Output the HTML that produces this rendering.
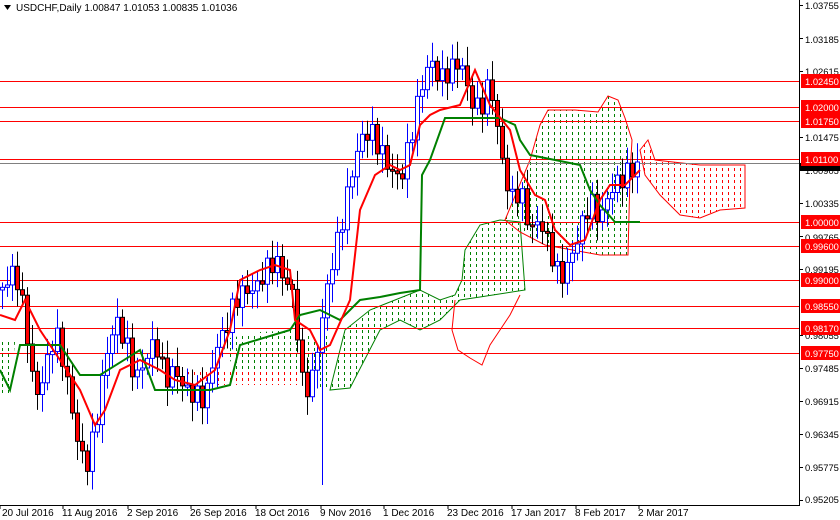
<!DOCTYPE html>
<html><head><meta charset="utf-8"><style>
html,body{margin:0;padding:0;background:#fff;width:840px;height:520px;overflow:hidden;font-family:"Liberation Sans",sans-serif}
svg{display:block}
text{font-family:"Liberation Sans",sans-serif;font-size:10px}
.ax text{font-size:9.4px}
</style></head><body>
<svg id="s" width="840" height="520" xmlns="http://www.w3.org/2000/svg">
<defs>
<pattern id="gd" width="6" height="6" patternUnits="userSpaceOnUse"><rect x="2" y="0" width="1" height="3" fill="#008000"/></pattern>
<pattern id="rd" width="6" height="6" patternUnits="userSpaceOnUse"><rect x="2" y="0" width="1" height="3" fill="#ff0000"/></pattern>
</defs>
<rect width="840" height="520" fill="#fff"/>
<polygon fill="url(#gd)" stroke="#008000" stroke-width="1" points="330,390 345,330 370,310 395,300 420,290 440,300 455,295 462,280 465,250 480,225 500,220 520,222 525,290 480,297 460,300 440,320 420,330 400,320 380,330 350,388"/>
<polygon fill="url(#gd)" stroke="#ff0000" stroke-width="1" points="505,220 530,160 540,125 548,110 575,110 598,112 608,96 618,100 625,118 632,140 630,175 628,255 600,255 545,245 520,232"/>
<polygon fill="url(#gd)" points="0,340 15,342 10,395 0,395"/>
<polygon fill="url(#gd)" points="220,340 260,332 300,330 320,340 330,330 330,390 310,385 260,385 240,380"/>
<polygon fill="url(#rd)" stroke="#ff0000" stroke-width="1" points="640,150 648,140 655,160 700,165 745,165 745,208 720,210 700,218 680,215 660,195 645,175"/>
<polygon fill="url(#rd)" points="180,370 230,372 300,370 300,385 260,385 210,385"/>
<polyline fill="none" stroke="#ff0000" stroke-width="1" points="455,300 452,330 458,350 470,358 482,365 490,345 500,330 510,315 520,295"/>
<g stroke="#ff0000" stroke-width="1">
<line x1="0" x2="799" y1="81.5" y2="81.5"/><line x1="0" x2="799" y1="107.5" y2="107.5"/>
<line x1="0" x2="799" y1="121.5" y2="121.5"/><line x1="0" x2="799" y1="159.5" y2="159.5"/>
<line x1="0" x2="799" y1="222.5" y2="222.5"/><line x1="0" x2="799" y1="246.5" y2="246.5"/>
<line x1="0" x2="799" y1="280.5" y2="280.5"/><line x1="0" x2="799" y1="306.5" y2="306.5"/>
<line x1="0" x2="799" y1="328.5" y2="328.5"/><line x1="0" x2="799" y1="353.5" y2="353.5"/>
</g>
<line x1="0" x2="799" y1="163.5" y2="163.5" stroke="#808080"/>
<g id="candles"></g>
<polyline fill="none" stroke="#008000" stroke-width="2" points="0,370 10,390 20,345 60,345 80,375 100,375 140,350 155,390 210,390 230,385 240,345 290,330 300,315 320,310 340,320 360,300 380,297 400,293 420,290 422,175 430,160 445,118 500,118 515,125 520,140 530,155 580,165 590,190 600,205 615,222 640,222"/>
<polyline fill="none" stroke="#ff0000" stroke-width="2" points="0,315 15,320 25,300 40,330 60,360 80,390 95,425 105,410 120,370 140,360 160,370 175,380 195,385 215,370 230,330 240,280 260,270 275,265 290,270 295,320 310,330 320,350 330,345 350,300 360,210 375,175 390,165 400,170 410,165 420,125 430,115 440,110 460,105 475,70 490,105 510,130 520,170 535,195 545,200 555,230 570,245 585,240 600,200 610,185 625,185 640,170"/>
<line x1="799.5" y1="0" x2="799.5" y2="505" stroke="#000"/>
<line x1="0" y1="505.5" x2="800" y2="505.5" stroke="#000"/>
<g class="ax">
<g fill="#000">
<text x="805" y="9">1.03755</text><text x="805" y="43">1.03185</text><text x="805" y="75">1.02615</text>
<text x="805" y="141">1.01475</text><text x="805" y="174">1.00905</text><text x="805" y="207">1.00335</text>
<text x="805" y="241">0.99765</text><text x="805" y="273">0.99195</text><text x="805" y="339">0.98055</text>
<text x="805" y="372">0.97485</text><text x="805" y="405">0.96915</text><text x="805" y="438">0.96345</text>
<text x="805" y="471">0.95775</text><text x="805" y="503">0.95205</text>
</g>
<g stroke="#000"><line x1="799" x2="803" y1="5.5" y2="5.5"/><line x1="799" x2="803" y1="38.5" y2="38.5"/><line x1="799" x2="803" y1="71.5" y2="71.5"/><line x1="799" x2="803" y1="137.5" y2="137.5"/><line x1="799" x2="803" y1="170.5" y2="170.5"/><line x1="799" x2="803" y1="203.5" y2="203.5"/><line x1="799" x2="803" y1="236.5" y2="236.5"/><line x1="799" x2="803" y1="269.5" y2="269.5"/><line x1="799" x2="803" y1="335.5" y2="335.5"/><line x1="799" x2="803" y1="368.5" y2="368.5"/><line x1="799" x2="803" y1="401.5" y2="401.5"/><line x1="799" x2="803" y1="434.5" y2="434.5"/><line x1="799" x2="803" y1="467.5" y2="467.5"/><line x1="799" x2="803" y1="500.5" y2="500.5"/></g>
<rect x="800" y="163" width="40" height="8" fill="#000"/>
<g fill="#ff0000">
<rect x="801" y="74" width="39" height="14"/><rect x="801" y="100" width="39" height="14"/><rect x="801" y="114" width="39" height="14"/>
<rect x="801" y="152" width="39" height="14"/><rect x="801" y="215" width="39" height="14"/><rect x="801" y="239" width="39" height="14"/>
<rect x="801" y="273" width="39" height="14"/><rect x="801" y="299" width="39" height="14"/><rect x="801" y="321" width="39" height="14"/>
<rect x="801" y="346" width="39" height="14"/>
</g>
<g fill="#fff">
<text x="805" y="85">1.02450</text><text x="805" y="111">1.02000</text><text x="805" y="125">1.01750</text>
<text x="805" y="163">1.01100</text><text x="805" y="226">1.00000</text><text x="805" y="250">0.99600</text>
<text x="805" y="284">0.99000</text><text x="805" y="310">0.98550</text><text x="805" y="332">0.98170</text>
<text x="805" y="357">0.97750</text>
</g>
</g>
<g fill="#000">
<text x="2" y="516">20 Jul 2016</text><text x="62" y="516">11 Aug 2016</text><text x="127" y="516">2 Sep 2016</text>
<text x="190" y="516">26 Sep 2016</text><text x="255" y="516">18 Oct 2016</text><text x="320" y="516">9 Nov 2016</text>
<text x="383" y="516">1 Dec 2016</text><text x="447" y="516">23 Dec 2016</text><text x="511" y="516">17 Jan 2017</text>
<text x="575" y="516">8 Feb 2017</text><text x="638" y="516">2 Mar 2017</text>
</g>
<g stroke="#000"><line x1="0" x2="0" y1="505" y2="509"/><line x1="63" x2="63" y1="505" y2="509"/><line x1="128" x2="128" y1="505" y2="509"/><line x1="191" x2="191" y1="505" y2="509"/><line x1="256" x2="256" y1="505" y2="509"/><line x1="321" x2="321" y1="505" y2="509"/><line x1="384" x2="384" y1="505" y2="509"/><line x1="448" x2="448" y1="505" y2="509"/><line x1="512" x2="512" y1="505" y2="509"/><line x1="576" x2="576" y1="505" y2="509"/><line x1="639" x2="639" y1="505" y2="509"/></g>
<polygon points="4,5 11,5 7.5,10" fill="#000"/>
<text x="16" y="11" fill="#000">USDCHF,Daily  1.00847 1.01053 1.00835 1.01036</text>
</svg>
<script>
var A=[[0,290],[15,270],[25,320],[35,400],[45,370],[55,330],[65,370],[75,430],[85,470],[95,430],[105,360],[115,320],[125,340],[135,380],[145,360],[155,340],[165,380],[175,370],[185,390],[195,395],[205,400],[215,350],[225,330],[235,300],[245,290],[255,290],[265,270],[275,260],[285,280],[295,300],[300,380],[310,390],[320,330],[330,270],[340,230],[350,180],[360,140],[370,130],[380,150],[390,170],[400,180],[410,140],[420,90],[430,60],[440,80],[450,70],[460,60],[470,100],[480,110],[490,80],[500,150],[510,200],[520,190],[530,230],[540,220],[550,250],[560,280],[570,260],[580,230],[590,200],[600,220],[610,190],[620,180],[630,170],[640,165]];
function f(x){for(var i=0;i<A.length-1;i++){if(x<=A[i+1][0]){var t=(x-A[i][0])/(A[i+1][0]-A[i][0]);return A[i][1]+t*(A[i+1][1]-A[i][1]);}}return A[A.length-1][1];}
var g=document.getElementById('candles'),h='',prev=f(0);
for(var i=0;i<128;i++){var x=2+i*5;var c=f(x)+Math.sin(i*2.7)*10;var o=prev;prev=c;
var hi=Math.min(o,c)-5-Math.abs(Math.sin(i*1.3))*14,lo=Math.max(o,c)+5+Math.abs(Math.cos(i*1.9))*14;
if(i==64){lo=485;}
var bull=c<o;var t=Math.min(o,c),b=Math.max(Math.max(o,c),t+2);
h+='<line x1="'+(x+0.5)+'" x2="'+(x+0.5)+'" y1="'+hi+'" y2="'+lo+'" stroke="'+(bull?'#0000ff':'#000')+'"/>';
h+='<rect x="'+(x-1.5)+'" y="'+t+'" width="4" height="'+(b-t)+'" fill="'+(bull?'#fff':'#ff0000')+'" stroke="'+(bull?'#0000ff':'#000')+'" stroke-width="1"/>';}
g.innerHTML=h;
</script>
</body></html>
